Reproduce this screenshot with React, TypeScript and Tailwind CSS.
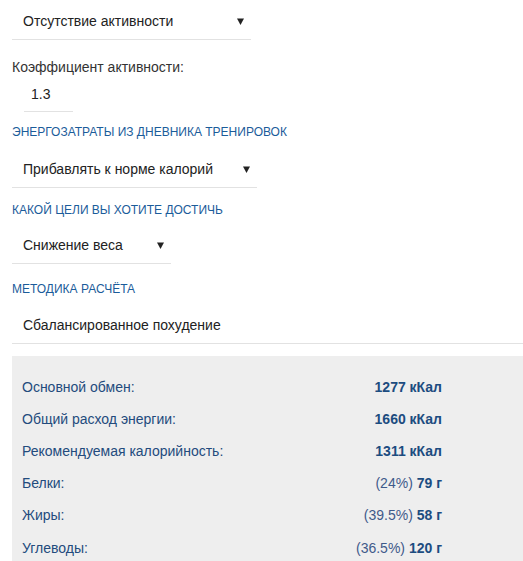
import React from "react";

const Arrow = () => (
  <svg width="7" height="7" viewBox="0 0 7 7" className="shrink-0">
    <path d="M0 0.5 L7 0.5 L3.5 7 Z" fill="#222" />
  </svg>
);

const Select = ({ text, width }: { text: string; width: string }) => (
  <div className={`flex items-center justify-between h-[40px] pt-[3px] border-b border-[#e2e2e2] pl-[11px] pr-[7px] text-[14px] text-[#222] ${width}`}>
    <span>{text}</span>
    <Arrow />
  </div>
);

const Header = ({ children }: { children: React.ReactNode }) => (
  <div className="text-[12px] text-[#1b5c9a] leading-[14px]">{children}</div>
);

const rows: { label: string; pct?: string; value: string }[] = [
  { label: "Основной обмен:", value: "1277 кКал" },
  { label: "Общий расход энергии:", value: "1660 кКал" },
  { label: "Рекомендуемая калорийность:", value: "1311 кКал" },
  { label: "Белки:", pct: "(24%)", value: "79 г" },
  { label: "Жиры:", pct: "(39.5%)", value: "58 г" },
  { label: "Углеводы:", pct: "(36.5%)", value: "120 г" },
];

export default function App() {
  return (
    <div
      className="w-[523px] h-[561px] overflow-hidden bg-white pl-[12px]"
      style={{ fontFamily: '"Liberation Sans", Arial, sans-serif' }}
    >
      <Select text="Отсутствие активности" width="w-[239px]" />
      <div className="mt-[18px] text-[14px] text-[#333] leading-[18px]">Коэффициент активности:</div>
      <div className="ml-[12px] w-[49px] h-[36px] border-b border-[#e2e2e2] flex items-center pl-[7px] pt-[1px] text-[14px] text-[#222]">
        1.3
      </div>
      <div className="mt-[13px]">
        <Header>ЭНЕРГОЗАТРАТЫ ИЗ ДНЕВНИКА ТРЕНИРОВОК</Header>
      </div>
      <div className="mt-[9px]">
        <Select text="Прибавлять к норме калорий" width="w-[245px]" />
      </div>
      <div className="mt-[15px]">
        <Header>КАКОЙ ЦЕЛИ ВЫ ХОТИТЕ ДОСТИЧЬ</Header>
      </div>
      <div className="mt-[7px]">
        <Select text="Снижение веса" width="w-[159px]" />
      </div>
      <div className="mt-[18px]">
        <Header>МЕТОДИКА РАСЧЁТА</Header>
      </div>
      <div className="mt-[8px] h-[40px] border-b border-[#e2e2e2] pl-[11px] flex items-center pt-[4px] text-[14px] text-[#222]">
        Сбалансированное похудение
      </div>
      <div className="mt-[12px] bg-[#eeeeee] h-[220px] pt-[15px] pl-[10px] pr-[81px]">
        {rows.map((r) => (
          <div key={r.label} className="flex items-center justify-between h-[32.2px] text-[14px]">
            <span className="text-[#234b7d]">{r.label}</span>
            <span className="text-[#1c4c80]">
              {r.pct && <span className="text-[#3f5a8a]">{r.pct} </span>}
              <span className="font-bold">{r.value}</span>
            </span>
          </div>
        ))}
      </div>
    </div>
  );
}
